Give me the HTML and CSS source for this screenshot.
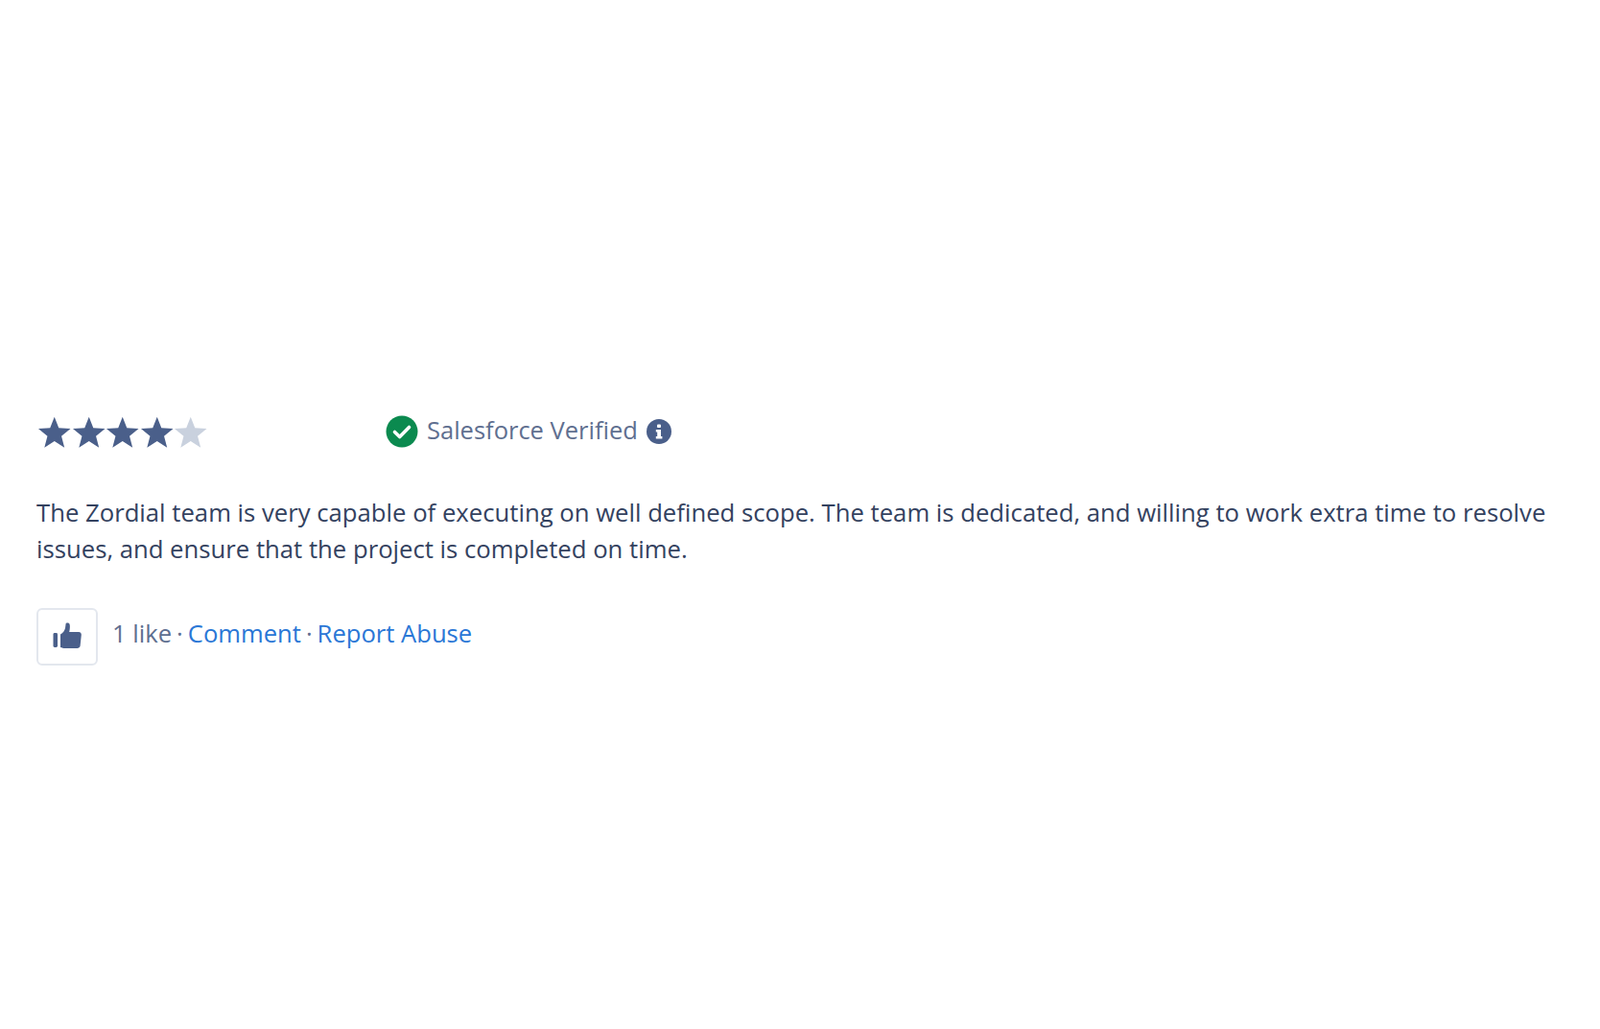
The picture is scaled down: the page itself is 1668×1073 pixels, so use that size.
FILE: index.html
```html
<!DOCTYPE html>
<html lang="en">
<head>
    <meta charset="UTF-8">
    <title>Review</title>
    <link rel="stylesheet" href="styles.css">
</head>
<body>
    <div class="review">
        <div class="review-head">
            <div class="stars">
                <svg class="star" viewBox="0 0 36 36"><path d="M18 1.500l4.600 11.600 12.400.8-9.600 7.900 3.200 12.200L18 27.200 7.400 34l3.200-12.200L1 13.900l12.400-.8z"/></svg>
                <svg class="star" viewBox="0 0 36 36"><path d="M18 1.500l4.600 11.600 12.400.8-9.600 7.900 3.200 12.200L18 27.200 7.400 34l3.200-12.200L1 13.900l12.400-.8z"/></svg>
                <svg class="star" viewBox="0 0 36 36"><path d="M18 1.500l4.600 11.600 12.400.8-9.600 7.900 3.200 12.200L18 27.200 7.400 34l3.200-12.200L1 13.900l12.400-.8z"/></svg>
                <svg class="star" viewBox="0 0 36 36"><path d="M18 1.500l4.600 11.600 12.400.8-9.600 7.900 3.200 12.200L18 27.200 7.400 34l3.200-12.200L1 13.900l12.400-.8z"/></svg>
                <svg class="star star-empty" viewBox="0 0 36 36"><path d="M18 1.500l4.600 11.600 12.400.8-9.600 7.900 3.200 12.200L18 27.200 7.400 34l3.200-12.200L1 13.900l12.400-.8z"/></svg>
            </div>
            <div class="verified">
                <svg class="verified-check" viewBox="0 0 34 34">
                    <circle cx="17" cy="17" r="16.500" fill="#0b8a4f"/>
                    <path d="M9.500 17.500l5.200 5 9.800-10" fill="none" stroke="#fff" stroke-width="3.600" stroke-linecap="round" stroke-linejoin="round"/>
                </svg>
                <span>Salesforce Verified</span>
                <svg class="verified-info" viewBox="0 0 26 26">
                    <circle cx="13" cy="13" r="13" fill="#4a5f8a"/>
                    <rect x="11" y="5.500" width="4" height="3.600" rx="1" fill="#fff"/>
                    <path d="M9.800 11h5.200v7h1.400v2.400H9.800V18h1.400v-4.600H9.800z" fill="#fff"/>
                </svg>
            </div>
        </div>
        <p class="review-text">The Zordial team is very capable of executing on well defined scope. The team is dedicated, and willing to work extra time to resolve issues, and ensure that the project is completed on time.</p>
        <div class="review-actions">
            <button class="like-button" type="button">
                <svg viewBox="0 0 30 30">
                    <rect x="0.500" y="11" width="4.500" height="15" rx="1.400"/>
                    <path d="M8 12.500C10.500 11 12.500 8.500 13 6l.6-4.500C13.800.2 17 .2 17.600 2c.6 2 .2 5.500-.4 8H27c2 0 3 1.500 2.800 3l-1.200 11.500c-.2 1.500-1.600 2.500-3.100 2.500H13c-2 0-3.500-.5-5-1z"/>
                </svg>
            </button>
            <div class="action-links">
                <span>1 like</span>
                <span class="dot">·</span>
                <a href="#">Comment</a>
                <span class="dot">·</span>
                <a href="#">Report Abuse</a>
            </div>
        </div>
    </div>
</body>
</html>
```

FILE: styles.css
```css
body {
    font-family: "Open Sans", Lato, sans-serif;
    background: #ffffff;
    color: #34425f;
    margin: 0;
    padding: 0;
}

.review {
    padding: 431px 38px 0 38px;
}

.review-head {
    display: flex;
    align-items: center;
    height: 38px;
}

.stars {
    display: flex;
    width: 363px;
    margin: 1px 0 0 1px;
}

.star {
    width: 35.500px;
    height: 36px;
    fill: #4a5f8a;
}

.star-empty {
    fill: #c9d1de;
}

.verified {
    display: flex;
    align-items: center;
    font-size: 25.500px;
    color: #5f6f90;
}

.verified span {
    position: relative;
    top: -2px;
}

.verified-check {
    width: 34px;
    height: 34px;
    margin-right: 9px;
}

.verified-info {
    width: 26px;
    height: 26px;
    margin-left: 9px;
}

.review-text {
    font-size: 25.700px;
    line-height: 38px;
    margin: 47px 0 0 0;
}

.review-actions {
    display: flex;
    align-items: flex-start;
    margin-top: 42px;
}

.like-button {
    width: 64px;
    height: 60px;
    padding: 0;
    background: #fff;
    border: 2px solid #e3e7ee;
    border-radius: 6px;
    display: flex;
    align-items: center;
    justify-content: center;
}

.like-button svg {
    width: 30px;
    height: 30px;
    fill: #4a5f8a;
}

.action-links {
    display: flex;
    gap: 5px;
    font-size: 25.600px;
    line-height: 38px;
    color: #5f6f90;
    margin-left: 15px;
    margin-top: 8px;
}

.action-links a {
    color: #2a77d6;
    text-decoration: none;
}
```
